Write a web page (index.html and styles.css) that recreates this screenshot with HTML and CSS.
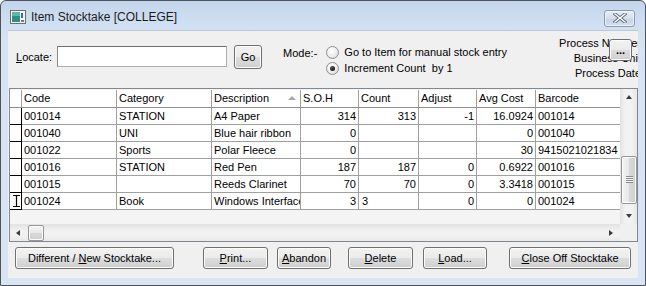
FILE: index.html
```html
<!DOCTYPE html>
<html lang="en">

<head>
    <meta charset="UTF-8">
    <meta name="viewport" content="width=device-width, initial-scale=1.0">
    <link rel="stylesheet" href="styles.css">
</head>

<body>

    <div class="window">
        <div class="titlebar">
            <svg class="app-icon" width="16" height="14" viewBox="0 0 16 14">
                <rect x="0.5" y="0.5" width="15" height="13" fill="#f4f4f4" stroke="#6d6d6d"/>
                <rect x="2" y="2" width="8" height="10" fill="#2f8f86"/>
                <rect x="2" y="2" width="8" height="4" fill="#5fb5a8"/>
                <rect x="11" y="3" width="2" height="5" fill="#2a6fb0"/>
                <rect x="11" y="10" width="3" height="2" fill="#7a7a7a"/>
            </svg>
            <span class="title">Item Stocktake [COLLEGE]</span>
            <button class="close-btn" type="button">
                <svg width="14" height="10" viewBox="0 0 14 10">
                    <path d="M2 1 L12 9 M12 1 L2 9" stroke="#5e6d82" stroke-width="3.2" stroke-linecap="square"/>
                    <path d="M2 1 L12 9 M12 1 L2 9" stroke="#ffffff" stroke-width="1.4" stroke-linecap="square"/>
                </svg>
            </button>
        </div>

        <div class="client">
            <div class="toolbar">
                <span class="locate-label"><u>L</u>ocate:</span>
                <input class="locate-input" type="text">
                <button class="btn go-btn" type="button">Go</button>
                <span class="mode-label">Mode:-</span>
                <div class="mode-options">
                    <div class="radio"><span class="radio-circle"></span>Go to Item for manual stock entry</div>
                    <div class="radio"><span class="radio-circle checked"></span>Increment Count&nbsp; by 1</div>
                </div>
                <div class="process-info">
                    <div>Process Number</div>
                    <div>Business Unit</div>
                    <div>Process Date</div>
                    <button class="btn more-btn" type="button">...</button>
                </div>
            </div>

            <div class="grid">
                <div class="grid-main">
                    <div class="grid-body">
                        <div class="grid-row header">
                            <div class="cell ind"></div>
                            <div class="cell">Code</div>
                            <div class="cell">Category</div>
                            <div class="cell sorted">Description<span class="sort-arrow"></span></div>
                            <div class="cell">S.O.H</div>
                            <div class="cell">Count</div>
                            <div class="cell">Adjust</div>
                            <div class="cell">Avg Cost</div>
                            <div class="cell last">Barcode</div>
                        </div>
                        <div class="grid-row">
                            <div class="cell ind"></div>
                            <div class="cell">001014</div>
                            <div class="cell">STATION</div>
                            <div class="cell">A4 Paper</div>
                            <div class="cell num">314</div>
                            <div class="cell num">313</div>
                            <div class="cell num">-1</div>
                            <div class="cell num">16.0924</div>
                            <div class="cell last">001014</div>
                        </div>
                        <div class="grid-row">
                            <div class="cell ind"></div>
                            <div class="cell">001040</div>
                            <div class="cell">UNI</div>
                            <div class="cell">Blue hair ribbon</div>
                            <div class="cell num">0</div>
                            <div class="cell num"></div>
                            <div class="cell num"></div>
                            <div class="cell num">0</div>
                            <div class="cell last">001040</div>
                        </div>
                        <div class="grid-row">
                            <div class="cell ind"></div>
                            <div class="cell">001022</div>
                            <div class="cell">Sports</div>
                            <div class="cell">Polar Fleece</div>
                            <div class="cell num">0</div>
                            <div class="cell num"></div>
                            <div class="cell num"></div>
                            <div class="cell num">30</div>
                            <div class="cell last">9415021021834</div>
                        </div>
                        <div class="grid-row">
                            <div class="cell ind"></div>
                            <div class="cell">001016</div>
                            <div class="cell">STATION</div>
                            <div class="cell">Red Pen</div>
                            <div class="cell num">187</div>
                            <div class="cell num">187</div>
                            <div class="cell num">0</div>
                            <div class="cell num">0.6922</div>
                            <div class="cell last">001016</div>
                        </div>
                        <div class="grid-row">
                            <div class="cell ind"></div>
                            <div class="cell">001015</div>
                            <div class="cell"></div>
                            <div class="cell">Reeds Clarinet</div>
                            <div class="cell num">70</div>
                            <div class="cell num">70</div>
                            <div class="cell num">0</div>
                            <div class="cell num">3.3418</div>
                            <div class="cell last">001015</div>
                        </div>
                        <div class="grid-row">
                            <div class="cell ind current">
                                <svg width="7" height="12" viewBox="0 0 7 12">
                                    <path d="M0 0.5 H7 M0 11.5 H7 M3.5 0 V12" stroke="#000" stroke-width="1.2"/>
                                </svg>
                            </div>
                            <div class="cell">001024</div>
                            <div class="cell">Book</div>
                            <div class="cell">Windows Interface</div>
                            <div class="cell num">3</div>
                            <div class="cell editing">3</div>
                            <div class="cell num">0</div>
                            <div class="cell num">0</div>
                            <div class="cell last">001024</div>
                        </div>
                    </div>
                    <div class="vscroll">
                        <span class="arrow up"></span>
                        <div class="vtrack">
                            <div class="vthumb"><span class="grip"></span></div>
                        </div>
                        <span class="arrow down"></span>
                    </div>
                </div>
                <div class="grid-foot">
                    <div class="hscroll">
                        <span class="arrow left"></span>
                        <div class="hthumb"></div>
                        <span class="arrow right"></span>
                    </div>
                    <div class="corner"></div>
                </div>
            </div>

            <div class="actions">
                <button class="btn act-new" type="button">Different / <u>N</u>ew Stocktake...</button>
                <button class="btn act-print" type="button"><u>P</u>rint...</button>
                <button class="btn act-abandon" type="button"><u>A</u>bandon</button>
                <button class="btn act-delete" type="button"><u>D</u>elete</button>
                <button class="btn act-load" type="button"><u>L</u>oad...</button>
                <button class="btn act-close" type="button"><u>C</u>lose Off Stocktake</button>
            </div>
        </div>
    </div>

</body>

</html>
```

FILE: styles.css
```css
* {
    box-sizing: border-box;
}

body {
    margin: 0;
    background-color: #fff;
    font-family: "Liberation Sans", Arial, sans-serif;
    font-size: 11px;
    color: #000;
}

.window {
    width: 646px;
    height: 286px;
    border: 1px solid #4e5359;
    border-radius: 6px 6px 0 0;
    background: linear-gradient(#c3d5ec 0px, #cfdef1 20px, #d6e3f3 40px, #d9e5f4 100%);
    padding: 0 7px 7px 7px;
    display: flex;
    flex-direction: column;
}

.titlebar {
    height: 29px;
    display: flex;
    align-items: center;
    padding-left: 2px;
}

.app-icon {
    margin-top: 3px;
}

.title {
    font-size: 12px;
    color: #1b1b1b;
    margin-left: 5px;
    margin-top: 2px;
}

.close-btn {
    margin-left: auto;
    margin-right: 3px;
    margin-top: 5px;
    width: 31px;
    height: 17px;
    padding: 0;
    border: 1px solid #8a9ab0;
    border-radius: 3px;
    background: linear-gradient(#e7eef7, #d3deec 50%, #c6d4e6 51%, #d3dfee);
    box-shadow: inset 0 0 0 1px rgba(255, 255, 255, 0.6);
    display: flex;
    justify-content: center;
    align-items: center;
}

.client {
    height: 248px;
    background-color: #f0f0f0;
    display: flex;
    flex-direction: column;
    overflow: hidden;
    border-top: 1px solid #b9c9dc;
}

/* top row */
.toolbar {
    height: 57px;
    display: flex;
    align-items: flex-start;
    padding-left: 8px;
}

.locate-label {
    margin-top: 19px;
    line-height: 14px;
}

.locate-input {
    margin-left: 5px;
    margin-top: 15px;
    width: 170px;
    height: 21px;
    border: 1px solid #abadb3;
    border-top-color: #6f6f6f;
    border-left-color: #8a8a8a;
    background-color: #fff;
    padding: 0 3px;
    font: inherit;
}

.btn {
    font: inherit;
    color: #000;
    padding: 0;
    border: 1px solid #707070;
    border-radius: 3px;
    background: linear-gradient(#f2f2f2 0%, #ebebeb 48%, #dddddd 52%, #cfcfcf 100%);
    box-shadow: inset 0 0 0 1px #fbfbfb;
    text-align: center;
    cursor: pointer;
}

.go-btn {
    margin-left: 7px;
    margin-top: 14px;
    width: 28px;
    height: 24px;
}

.mode-label {
    margin-left: 21px;
    margin-top: 15px;
    line-height: 14px;
}

.mode-options {
    margin-left: 9px;
    margin-top: 14px;
}

.radio {
    display: flex;
    align-items: center;
    height: 15px;
    line-height: 15px;
    margin-bottom: 1px;
}

.radio-circle {
    width: 13px;
    height: 13px;
    border-radius: 50%;
    border: 1px solid #8e8f8f;
    background: radial-gradient(circle at 40% 35%, #ffffff 0%, #f0f0f0 45%, #d4d4d4 100%);
    margin-right: 5px;
    display: flex;
    justify-content: center;
    align-items: center;
}

.radio-circle.checked::after {
    content: "";
    width: 5px;
    height: 5px;
    border-radius: 50%;
    background: radial-gradient(circle at 35% 35%, #555, #000);
}

.process-info {
    position: relative;
    margin-left: auto;
    margin-right: -3px;
    margin-top: 5px;
    text-align: right;
    line-height: 15px;
}

.more-btn {
    position: absolute;
    right: 9px;
    top: 3px;
    width: 23px;
    height: 22px;
    font-weight: bold;
    line-height: 12px;
}

/* grid */
.grid {
    margin-left: 1px;
    width: 629px;
    border: 1px solid #828790;
    display: flex;
    flex-direction: column;
    background-color: #f4f4f4;
}

.grid-main {
    display: flex;
    height: 135px;
    padding-top: 1px;
}

.grid-body {
    width: 610px;
}

.grid-row {
    display: grid;
    grid-template-columns: 12px 95px 95px 89px 58px 60px 58px 59px 84px;
    height: 17px;
}

.grid-row.header {
    height: 18px;
}

.cell {
    background-color: #fff;
    border-right: 1px solid #a0a0a0;
    border-bottom: 1px solid #a0a0a0;
    padding: 0 2px;
    line-height: 16px;
    white-space: nowrap;
    overflow: hidden;
}

.header .cell {
    line-height: 17px;
    border-bottom-color: #8f8f8f;
}

.cell.last {
    border-right: none;
}

.cell.num {
    text-align: right;
}

.cell.editing {
    padding-left: 3px;
}

.grid-row .ind {
    padding: 0;
    border-right-color: #000;
    border-bottom-color: #000;
}

.header .ind {
    border-right-color: #a0a0a0;
    border-bottom-color: #8f8f8f;
}

.ind.current {
    display: flex;
    align-items: center;
    padding-left: 3px;
}

.sorted {
    position: relative;
}

.sort-arrow {
    position: absolute;
    right: 4px;
    top: 6px;
    border-left: 4px solid transparent;
    border-right: 4px solid transparent;
    border-bottom: 4px solid #a7a7a7;
}

/* scrollbars */
.vscroll {
    width: 17px;
    margin-top: -1px;
    display: flex;
    flex-direction: column;
    align-items: center;
    background: linear-gradient(90deg, #e2e2e2, #f2f2f2 30%, #f2f2f2 70%, #e6e6e6);
}

.arrow {
    display: block;
    width: 0;
    height: 0;
    border: 3px solid transparent;
}

.arrow.up {
    border-top: none;
    border-bottom: 4px solid #3c3c3c;
    margin: 6px 0 0 1px;
}

.arrow.down {
    border-bottom: none;
    border-top: 4px solid #3c3c3c;
    margin: 0 0 6px 1px;
}

.vtrack {
    flex: 1;
    width: 100%;
    padding-top: 57px;
}

.vthumb {
    margin-left: 1px;
    width: 16px;
    height: 48px;
    border: 1px solid #979797;
    border-radius: 2px;
    background: linear-gradient(90deg, #f4f4f4, #e8e8e8 50%, #d8d8d8 51%, #d0d0d0);
    box-shadow: inset 0 0 0 1px #fafafa;
    display: flex;
    justify-content: center;
    padding-top: 19px;
}

.grip {
    width: 7px;
    height: 7px;
    background: repeating-linear-gradient(#8c8c8c 0 1px, #f4f4f4 1px 2px);
}

.grid-foot {
    display: flex;
    height: 17px;
}

.hscroll {
    width: 610px;
    display: flex;
    align-items: center;
    border-top: 1px solid #e3e3e3;
    background: linear-gradient(#e4e4e4, #f1f1f1 35%, #f1f1f1 70%, #e9e9e9);
}

.arrow.left {
    border-left: none;
    border-right: 4px solid #3c3c3c;
    margin-left: 6px;
}

.arrow.right {
    border-right: none;
    border-left: 4px solid #3c3c3c;
    margin-left: auto;
    margin-right: 7px;
}

.hthumb {
    margin-left: 8px;
    width: 16px;
    height: 16px;
    border: 1px solid #979797;
    border-radius: 2px;
    background: linear-gradient(#f4f4f4, #e8e8e8 50%, #d8d8d8 51%, #d0d0d0);
    box-shadow: inset 0 0 0 1px #fafafa;
}

.corner {
    flex: 1;
    background-color: #f0f0f0;
}

/* bottom buttons */
.actions {
    display: flex;
    margin-top: 5px;
    padding-left: 7px;
}

.actions .btn {
    height: 22px;
}

.act-new {
    width: 159px;
}

.act-print {
    width: 65px;
    margin-left: 29px;
}

.act-abandon {
    width: 54px;
    margin-left: 9px;
}

.act-delete {
    width: 65px;
    margin-left: 17px;
}

.act-load {
    width: 64px;
    margin-left: 10px;
}

.act-close {
    width: 122px;
    margin-left: 22px;
}
```
